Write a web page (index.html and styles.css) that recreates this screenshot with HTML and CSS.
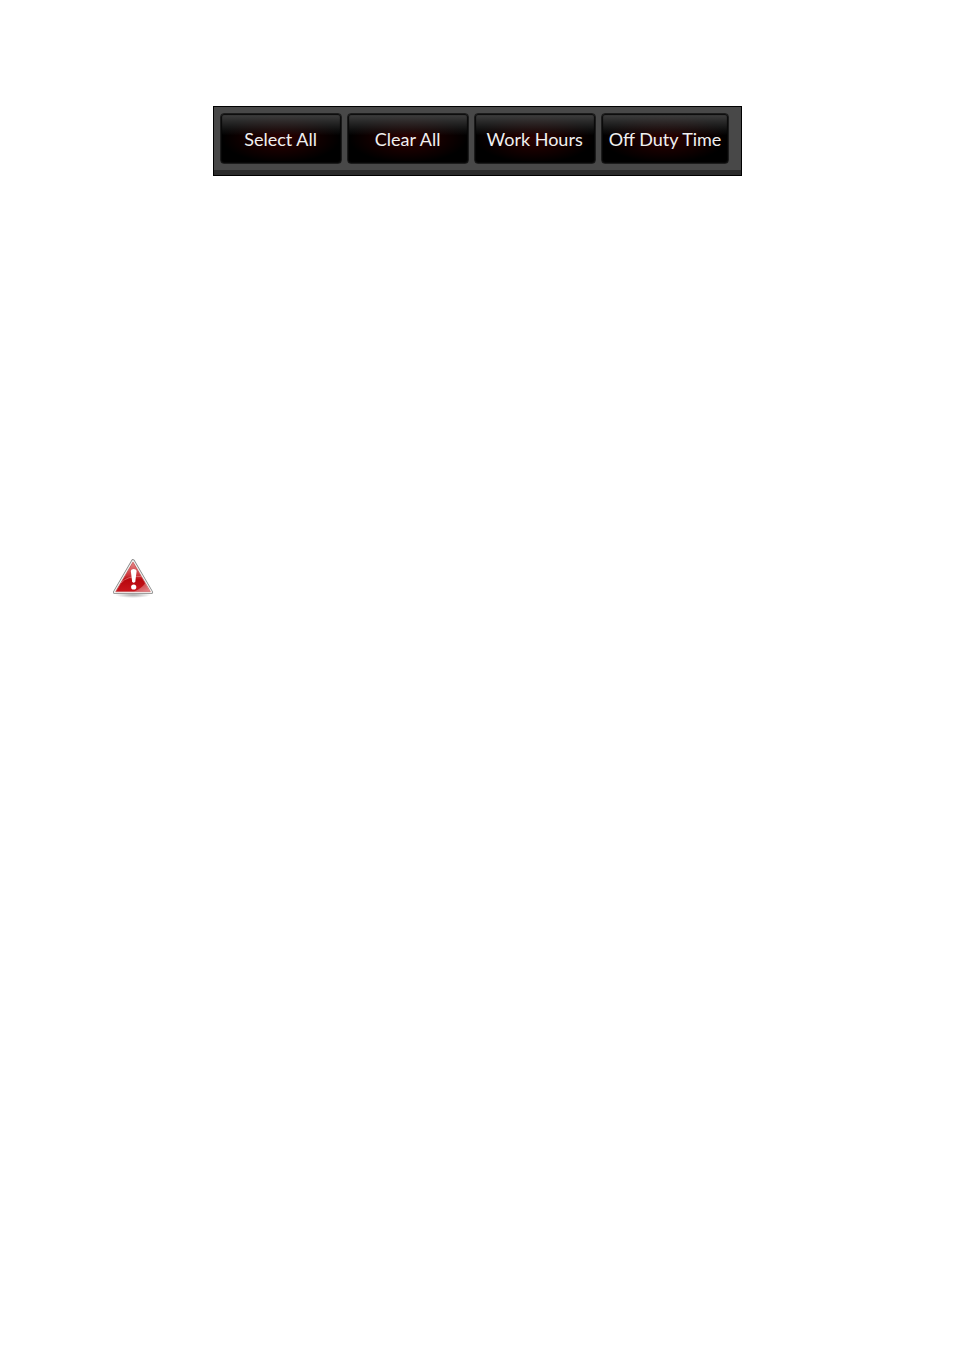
FILE: index.html
```html
<!DOCTYPE html>
<html lang="en">
<head>
<meta charset="utf-8">
<title>Schedule</title>
<link rel="stylesheet" href="styles.css">
</head>
<body>

<div class="page">
    <div class="toolbar">
        <button type="button">Select All</button>
        <button type="button">Clear All</button>
        <button type="button">Work Hours</button>
        <button type="button">Off Duty Time</button>
    </div>

    <svg class="warning" viewBox="0 0 42 42" role="img" aria-label="Warning">
        <defs>
            <linearGradient id="red" x1="0" y1="0" x2="0" y2="1">
                <stop offset="0" stop-color="#e58a8a"/>
                <stop offset="0.45" stop-color="#cc3338"/>
                <stop offset="0.6" stop-color="#b8080e"/>
                <stop offset="1" stop-color="#c9161d"/>
            </linearGradient>
            <linearGradient id="shine" x1="0" y1="0" x2="1" y2="1">
                <stop offset="0" stop-color="#fff" stop-opacity="0.1"/>
                <stop offset="1" stop-color="#fff" stop-opacity="0.5"/>
            </linearGradient>
            <radialGradient id="shadow">
                <stop offset="0" stop-color="#888" stop-opacity="0.7"/>
                <stop offset="1" stop-color="#888" stop-opacity="0"/>
            </radialGradient>
        </defs>
        <ellipse cx="21" cy="37" rx="18" ry="3" fill="url(#shadow)"/>
        <path d="M21 3 L39.3 34.3 H2.7 Z" fill="#fff" stroke="#858585" stroke-width="3.6" stroke-linejoin="round"/>
        <path d="M21 3 L39.3 34.3 H2.7 Z" fill="#fff" stroke="#f0f0ee" stroke-width="2" stroke-linejoin="round"/>
        <path d="M21 4.2 L38.2 33.6 H3.8 Z" fill="url(#red)" stroke="#c64a4d" stroke-width="0.8" stroke-linejoin="round"/>
        <path d="M38.2 33.6 H22 C28 31 33 27 33 24.5 Z" fill="url(#shine)"/>
        <path d="M9 25 Q15 17.5 30 18.5" fill="none" stroke="#e68588" stroke-width="1" opacity="0.6"/>
        <path d="M18.8 13 C19 10.2 24.4 10.2 24.6 13 L23.3 23.5 Q21.7 26 20.1 23.5 Z" fill="#fff"/>
        <circle cx="21.7" cy="29" r="2.6" fill="#fff"/>
    </svg>
</div>

</body>
</html>
```
FILE: styles.css
```css
body {
    margin: 0;
    background-color: #fff;
    font-family: Lato, sans-serif;
}
.page {
    padding: 106px 112px 0;
}
.toolbar {
    display: flex;
    gap: 5px;
    width: fit-content;
    margin: 0 auto;
    padding: 6px 12px 11px 6px;
    background-color: #484848;
    border: 1px solid #000;
    box-shadow: inset 0 -5px #2b2b2b;
}
.toolbar button {
    min-width: 122px;
    height: 51px;
    padding: 0 7px;
    border: 1px solid #1c1c1c;
    border-radius: 4px;
    background: linear-gradient(rgba(80, 80, 80, 0.8), rgba(40, 40, 40, 0.4) 32%, rgba(0, 0, 0, 0) 44%),
        radial-gradient(ellipse at center, #2c0000, #000 70%);
    box-shadow: inset 0 0 1px 1px #080808;
    color: #f0f0f0;
    font-family: inherit;
    font-size: 18px;
    line-height: 24px;
    white-space: nowrap;
    cursor: pointer;
}
.warning {
    display: block;
    width: 42px;
    height: 42px;
    margin-top: 382px;
}
```
